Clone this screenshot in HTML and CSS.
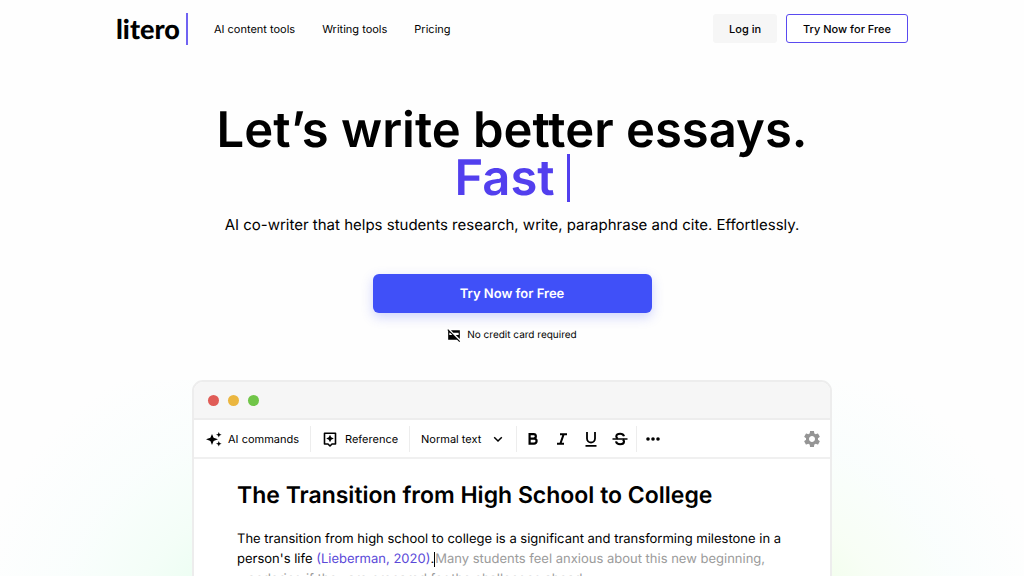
FILE: index.html
```html
<!DOCTYPE html>
<html lang="en">
<head>
    <meta charset="UTF-8">
    <meta name="viewport" content="width=device-width, initial-scale=1.0">
    <title>Litero</title>
    <link rel="stylesheet" href="styles.css">
</head>
<body>
    <header class="header">
        <a href="#" class="logo">litero</a>
        <nav class="nav">
            <a href="#">AI content tools</a>
            <a href="#">Writing tools</a>
            <a href="#">Pricing</a>
        </nav>
        <div class="header-actions">
            <button type="button" class="btn btn-light">Log in</button>
            <button type="button" class="btn btn-outline">Try Now for Free</button>
        </div>
    </header>

    <main>
        <section class="hero">
            <h1>Let’s write better essays.<br><span class="typed">Fast</span></h1>
            <p class="subtitle">AI co-writer that helps students research, write, paraphrase and cite. Effortlessly.</p>
            <button type="button" class="btn-cta">Try Now for Free</button>
            <p class="note">
                <svg width="14" height="14" viewBox="0 0 24 24" fill="currentColor" aria-hidden="true">
                    <path d="M6.800 4H22v14.800L15 12h5V8h-9.200zM2 2l20.500 20.500-1.400 1.400L17.200 20H2V4.800L.600 3.400zM4 8v4h5.200l-4-4z"/>
                </svg>
                No credit card required
            </p>
        </section>

        <section class="preview">
            <div class="editor">
                <div class="titlebar">
                    <span class="dot red"></span>
                    <span class="dot yellow"></span>
                    <span class="dot green"></span>
                </div>
                <div class="toolbar">
                    <button type="button" class="tool tool-ai">
                        <svg width="16" height="16" viewBox="0 0 16 16" aria-hidden="true">
                            <path d="M6 3l1.600 3.800L12 8.300 7.600 9.900 6 14 4.400 9.900 0 8.300l4.400-1.500zM12.800 1l.8 1.900 2 .8-2 .8-.8 1.900-.8-1.900-2-.8 2-.8zM12.800 10l.8 1.900 2 .8-2 .8-.8 1.900-.8-1.900-2-.8 2-.8z"/>
                        </svg>
                        AI commands
                    </button>
                    <button type="button" class="tool tool-ref">
                        <svg width="16" height="16" viewBox="0 0 16 16" aria-hidden="true">
                            <path d="M2.500 2.200h11v10.800h-3.500L8 15l-2-2H2.500z" fill="none" stroke="currentColor" stroke-width="1.600" stroke-linejoin="round"/>
                            <path d="M8 3.700l1.200 2.600 2.600 1.200-2.600 1.200L8 11.300 6.800 8.700 4.200 7.500l2.600-1.200z"/>
                        </svg>
                        Reference
                    </button>
                    <button type="button" class="tool tool-style">
                        Normal text
                        <svg width="10" height="10" viewBox="0 0 10 10" fill="none" stroke="currentColor" stroke-width="1.500" aria-hidden="true">
                            <path d="M1.200 3.200L5 7l3.800-3.800"/>
                        </svg>
                    </button>
                    <div class="formats">
                        <button type="button" class="format" aria-label="Bold">
                            <svg width="16" height="16" viewBox="0 0 16 16" fill="none" stroke="currentColor" stroke-width="2.200" aria-hidden="true">
                                <path d="M4.600 3.100h4a2.200 2.200 0 0 1 0 4.500h-4zM4.600 7.600h4.500a2.500 2.500 0 0 1 0 5H4.600z"/>
                            </svg>
                        </button>
                        <button type="button" class="format" aria-label="Italic">
                            <svg width="16" height="16" viewBox="0 0 16 16" fill="none" stroke="currentColor" stroke-width="2" aria-hidden="true">
                                <path d="M6 3.200h7M3 12.800h7M9.700 3.200L6.300 12.800"/>
                            </svg>
                        </button>
                        <button type="button" class="format" aria-label="Underline">
                            <svg width="16" height="16" viewBox="0 0 16 16" fill="none" stroke="currentColor" stroke-width="1.800" aria-hidden="true">
                                <path d="M4 1v6.500a4 4 0 0 0 8 0V1M2.500 14.800h11"/>
                            </svg>
                        </button>
                        <button type="button" class="format" aria-label="Strikethrough">
                            <svg width="16" height="16" viewBox="0 0 16 16" fill="none" stroke="currentColor" stroke-width="2.100" aria-hidden="true">
                                <path d="M12 5.200C11.500 3.500 10 2.700 8.100 2.700 5.900 2.700 4.300 3.700 4.300 5.400c0 .9.500 1.700 1.500 2.200M10.800 8.500c.8.500 1.200 1.200 1.200 2 0 1.700-1.600 2.800-3.900 2.800-2.100 0-3.700-1-4.100-2.900"/>
                                <path d="M.5 8h15" stroke-width="1.600"/>
                            </svg>
                        </button>
                    </div>
                    <button type="button" class="format more" aria-label="More">
                        <svg width="16" height="16" viewBox="0 0 16 16" aria-hidden="true">
                            <circle cx="3" cy="8" r="1.800"/>
                            <circle cx="8" cy="8" r="1.800"/>
                            <circle cx="13" cy="8" r="1.800"/>
                        </svg>
                    </button>
                    <button type="button" class="settings" aria-label="Settings">
                        <svg width="20" height="20" viewBox="0 0 24 24" fill="currentColor" aria-hidden="true">
                            <path d="M19.140 12.940c.04-.3.060-.610.060-.940 0-.320-.020-.640-.070-.940l2.030-1.580c.180-.140.230-.410.120-.610l-1.920-3.320c-.120-.220-.370-.290-.590-.220l-2.390.960c-.5-.380-1.030-.7-1.620-.940l-.360-2.540c-.040-.240-.240-.410-.480-.410h-3.840c-.240 0-.430.170-.470.410l-.360 2.540c-.590.240-1.130.570-1.620.940l-2.390-.960c-.220-.080-.470 0-.590.220L2.740 8.870c-.120.210-.080.470.120.610l2.030 1.580c-.050.300-.090.630-.090.940s.020.640.070.940l-2.030 1.580c-.180.140-.230.410-.120.610l1.920 3.320c.120.220.370.290.590.220l2.390-.960c.5.380 1.030.7 1.620.940l.360 2.540c.050.240.240.410.480.410h3.840c.240 0 .440-.170.470-.410l.360-2.540c.590-.240 1.130-.560 1.620-.940l2.390.960c.220.080.470 0 .590-.220l1.920-3.320c.120-.220.070-.470-.120-.610l-2.010-1.580zM12 15.600c-1.980 0-3.600-1.620-3.600-3.600s1.620-3.600 3.600-3.600 3.600 1.620 3.600 3.600-1.620 3.600-3.600 3.600z"/>
                        </svg>
                    </button>
                </div>
                <article class="document">
                    <h2>The Transition from High School to College</h2>
                    <p>The transition from high school to college is a significant and transforming milestone in a person's life <a href="#">(Lieberman, 2020)</a>.<span class="caret"></span><span class="suggestion">Many students feel anxious about this new beginning, wondering if they are prepared for the challenges ahead.</span></p>
                </article>
            </div>
        </section>
    </main>
</body>
</html>
```
FILE: styles.css
```css
* {
    margin: 0;
    padding: 0;
    box-sizing: border-box;
}

body {
    font-family: Inter, Arial, sans-serif;
    font-size: 11px;
    color: #000;
    background-color: #fefefe;
    text-rendering: geometricPrecision;
}

a {
    color: inherit;
    text-decoration: none;
}

button {
    font-family: inherit;
    color: inherit;
    border: none;
    background: none;
    cursor: pointer;
    text-rendering: inherit;
}

svg {
    flex-shrink: 0;
}

.header {
    display: flex;
    align-items: center;
    max-width: 824px;
    height: 57px;
    margin: 0 auto;
    padding: 0 16px;
}

.logo {
    padding-right: 6px;
    border-right: 2px solid #7063f2;
    font-family: Lato, sans-serif;
    font-size: 27px;
    font-weight: 900;
    line-height: 32px;
}

.nav {
    display: flex;
    gap: 27px;
    margin-left: 26px;
}

.header-actions {
    display: flex;
    gap: 9px;
    margin-left: auto;
}

.btn {
    height: 29px;
    padding: 0 16px;
    border-radius: 3px;
    font-size: 11px;
    font-weight: 500;
}

.btn-light {
    background-color: #f6f6f6;
}

.btn-outline {
    border: 1px solid #5a4af0;
    background-color: #fff;
}

.hero {
    display: flex;
    flex-direction: column;
    align-items: center;
    padding: 49px 16px 38px;
    text-align: center;
}

h1 {
    font-size: 49px;
    font-weight: 600;
    line-height: 48px;
}

.typed {
    display: inline-block;
    padding-right: 12px;
    border-right: 3px solid #523fee;
    color: #523fee;
}

.subtitle {
    margin-top: 12px;
    font-size: 15px;
    line-height: 22px;
}

.btn-cta {
    width: 100%;
    max-width: 279px;
    height: 39px;
    margin-top: 38px;
    border-radius: 6px;
    background-color: #4050f8;
    box-shadow: 0 4px 12px rgba(64, 80, 248, 0.25);
    color: #fff;
    font-size: 13px;
    font-weight: 600;
}

.note {
    display: flex;
    align-items: center;
    gap: 6px;
    margin-top: 15px;
    font-size: 10px;
    line-height: 14px;
}

/* Editor preview */
.preview {
    padding: 0 16px;
    background: radial-gradient(circle 300px at 26% 260px, rgba(210, 255, 224, 0.7), rgba(228, 255, 238, 0.4) 45%, rgba(240, 253, 250, 0.3) 70%, transparent),
        radial-gradient(circle 290px at 74% 260px, rgba(222, 255, 205, 0.7), rgba(238, 255, 232, 0.4) 45%, rgba(240, 253, 250, 0.3) 70%, transparent);
}

.editor {
    max-width: 640px;
    min-height: 360px;
    margin: 0 auto;
    border: 2px solid #ededed;
    border-radius: 11px;
    background-color: #fff;
    overflow: hidden;
}

.titlebar {
    display: flex;
    align-items: center;
    gap: 9px;
    height: 38px;
    padding-left: 14px;
    border-bottom: 2px solid #ededed;
    background-color: #f6f6f6;
}

.dot {
    width: 11px;
    height: 11px;
    border-radius: 50%;
}

.red {
    background-color: #e05c57;
}

.yellow {
    background-color: #ebb63f;
}

.green {
    background-color: #70c548;
}

.toolbar {
    display: flex;
    align-items: center;
    height: 39px;
    border-bottom: 2px solid #f0f0f0;
}

.tool {
    display: flex;
    align-items: center;
    height: 26px;
    padding: 0 11px;
    border-right: 1px solid #ededed;
    font-size: 11px;
}

.tool-ai {
    gap: 6px;
    padding-left: 12px;
}

.tool-ref {
    gap: 7px;
}

.tool-style {
    gap: 12px;
    padding-right: 13px;
}

.formats {
    display: flex;
    align-items: center;
    gap: 13px;
    height: 26px;
    padding: 0 8px;
    border-right: 1px solid #ededed;
}

.format {
    display: flex;
}

.more {
    margin-left: 8px;
}

.settings {
    display: flex;
    margin: 0 8px 0 auto;
    color: #959595;
}

.document {
    padding: 20px 43px;
}

.document h2 {
    font-size: 23px;
    font-weight: 600;
    line-height: 32px;
}

.document p {
    margin-top: 18px;
    font-size: 13px;
    line-height: 20px;
}

.document a {
    color: #5a49d8;
}

.caret {
    display: inline-block;
    width: 1px;
    height: 15px;
    background-color: #000;
    vertical-align: middle;
}

.suggestion {
    color: #9b9b9b;
}
```
